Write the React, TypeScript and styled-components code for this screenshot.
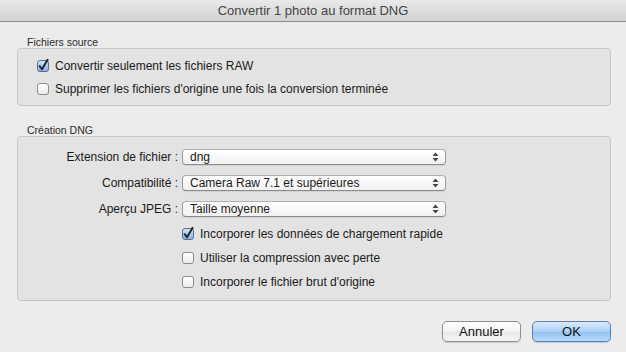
import { Fragment } from 'react';
import styled, { createGlobalStyle } from 'styled-components';

const GlobalStyle = createGlobalStyle`
  html, body {
    margin: 0;
    padding: 0;
    background: #ececec;
  }
  body {
    font-family: "Lucida Grande", "Liberation Sans", Arial, sans-serif;
    color: #1a1a1a;
  }
`;

const Window = styled.div`
  width: 626px;
  height: 352px;
  background: #ececec;
  display: flex;
  flex-direction: column;
  overflow: hidden;
`;

const TitleBar = styled.div`
  height: 22px;
  box-sizing: border-box;
  display: flex;
  align-items: center;
  justify-content: center;
  background: linear-gradient(#e9e9e9, #d3d3d3);
  border-bottom: 1px solid #8c8c8c;
  font-size: 13px;
  color: #444;
`;

const Content = styled.div`
  display: flex;
  flex-direction: column;
  padding: 14px 15px 0 17px;
`;

const SectionLabel = styled.div`
  font-size: 10.5px;
  color: #2a2a2a;
  height: 12px;
  line-height: 12px;
  padding-left: 10px;
`;

const Group = styled.div<{ $pad: string }>`
  background: #e3e3e3;
  border: 1px solid #c6c6c6;
  border-radius: 4px;
  padding: ${(p) => p.$pad};
  margin-bottom: 18px;
`;

const CheckRow = styled.label<{ $indent: number; $h: number }>`
  display: flex;
  align-items: center;
  gap: 5px;
  height: ${(p) => p.$h}px;
  padding-left: ${(p) => p.$indent}px;
  font-size: 12px;
`;

const FieldGrid = styled.div`
  display: grid;
  grid-template-columns: 160px 264px;
  column-gap: 4px;
  grid-auto-rows: 26px;
  align-items: center;
`;

const FieldLabel = styled.div`
  text-align: right;
  font-size: 12px;
`;

const Select = styled.div`
  height: 16px;
  box-sizing: border-box;
  border: 1px solid #9b9b9b;
  border-top-color: #b0b0b0;
  border-bottom-color: #8a8a8a;
  border-radius: 4px;
  background: linear-gradient(#ffffff, #f1f1f1);
  box-shadow: 0 1px 1px rgba(0, 0, 0, 0.08);
  display: flex;
  align-items: center;
  justify-content: space-between;
  padding: 0 6px 0 7px;
  font-size: 12px;
`;

const Footer = styled.div`
  display: flex;
  justify-content: flex-end;
  gap: 11px;
  padding-top: 2px;
`;

const Button = styled.div<{ $primary?: boolean }>`
  width: 79px;
  height: 21px;
  box-sizing: border-box;
  border-radius: 5px;
  border: 1px solid ${(p) => (p.$primary ? '#5b7eb3' : '#8f8f8f')};
  background: ${(p) =>
    p.$primary
      ? 'linear-gradient(#d9ebfc, #a9d0f5 50%, #8ec0f0 51%, #b9dcfb)'
      : 'linear-gradient(#ffffff, #f4f4f4 50%, #e8e8e8 51%, #f7f7f7)'};
  box-shadow: 0 1px 1px rgba(0, 0, 0, 0.15);
  display: flex;
  align-items: center;
  justify-content: center;
  font-size: 13px;
  color: #111;
`;

const CheckBox = ({ checked }: { checked?: boolean }) => (
  <svg width="14" height="14" viewBox="0 0 14 14" style={{ flexShrink: 0 }}>
    <defs>
      <linearGradient id={checked ? 'cbOn' : 'cbOff'} x1="0" y1="0" x2="0" y2="1">
        {checked ? (
          <>
            <stop offset="0" stopColor="#d6e8fb" />
            <stop offset="1" stopColor="#7fb0e6" />
          </>
        ) : (
          <>
            <stop offset="0" stopColor="#ffffff" />
            <stop offset="1" stopColor="#ececec" />
          </>
        )}
      </linearGradient>
    </defs>
    <rect
      x="1.5"
      y="1.5"
      width="11"
      height="11"
      rx="2.5"
      fill={`url(#${checked ? 'cbOn' : 'cbOff'})`}
      stroke={checked ? '#5a6f8d' : '#8c8c8c'}
    />
    {checked && (
      <path
        d="M3.6 7.2 L6 10.2 L11.6 0.8"
        fill="none"
        stroke="#1c2330"
        strokeWidth="1.9"
        strokeLinecap="round"
        strokeLinejoin="round"
      />
    )}
  </svg>
);

const Arrows = () => (
  <svg width="7" height="10" viewBox="0 0 7 10">
    <path d="M3.5 0.5 L6.5 4 L0.5 4 Z" fill="#444" />
    <path d="M3.5 9.5 L6.5 6 L0.5 6 Z" fill="#444" />
  </svg>
);

const fields = [
  { label: 'Extension de fichier :', value: 'dng' },
  { label: 'Compatibilité :', value: 'Camera Raw 7.1 et supérieures' },
  { label: 'Aperçu JPEG :', value: 'Taille moyenne' },
];

const options = [
  { text: 'Incorporer les données de chargement rapide', checked: true },
  { text: 'Utiliser la compression avec perte', checked: false },
  { text: "Incorporer le fichier brut d'origine", checked: false },
];

const App = () => (
  <Window>
    <GlobalStyle />
    <TitleBar>Convertir 1 photo au format DNG</TitleBar>
    <Content>
      <SectionLabel>Fichiers source</SectionLabel>
      <Group $pad="5px 0 5px 0">
        <CheckRow $indent={18} $h={23}>
          <CheckBox checked />
          Convertir seulement les fichiers RAW
        </CheckRow>
        <CheckRow $indent={18} $h={23}>
          <CheckBox />
          Supprimer les fichiers d'origine une fois la conversion terminée
        </CheckRow>
      </Group>

      <SectionLabel>Création DNG</SectionLabel>
      <Group $pad="7px 0 6px 0">
        <FieldGrid>
          {fields.map((f) => (
            <Fragment key={f.label}>
              <FieldLabel>{f.label}</FieldLabel>
              <Select>
                {f.value}
                <Arrows />
              </Select>
            </Fragment>
          ))}
        </FieldGrid>
        {options.map((o) => (
          <CheckRow key={o.text} $indent={163} $h={24}>
            <CheckBox checked={o.checked} />
            {o.text}
          </CheckRow>
        ))}
      </Group>

      <Footer>
        <Button>Annuler</Button>
        <Button $primary>OK</Button>
      </Footer>
    </Content>
  </Window>
);

export default App;
